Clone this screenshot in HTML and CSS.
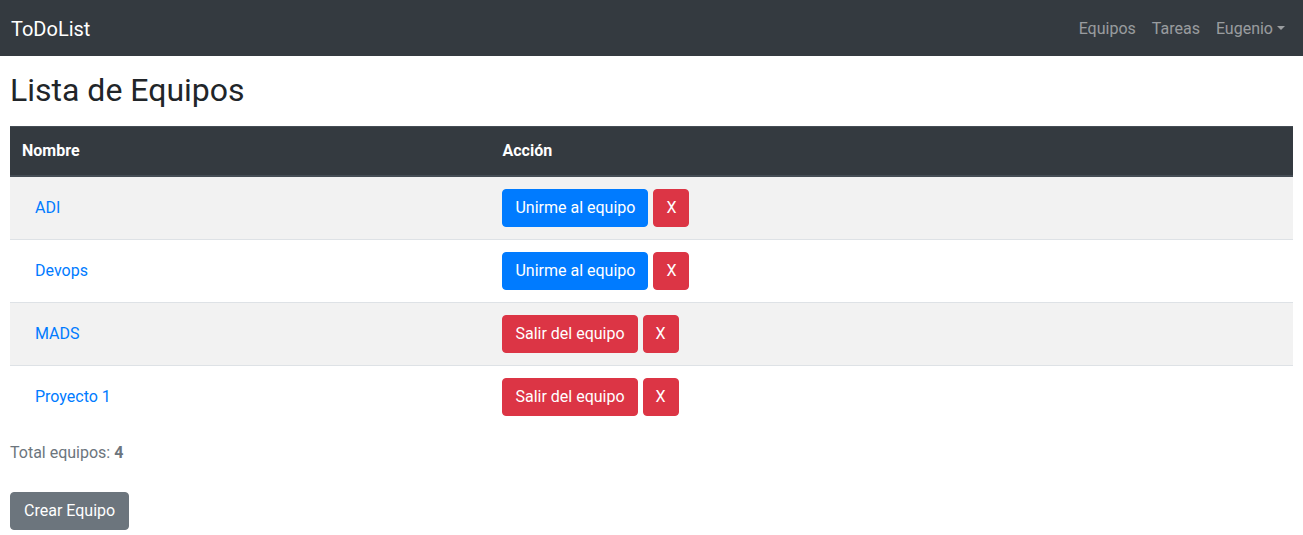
FILE: index.html
```html
<!DOCTYPE html>
<html lang="es">
<head>
<meta charset="utf-8">
<title>ToDoList</title>
<link rel="stylesheet" href="styles.css">
</head>
<body>
<nav class="navbar">
  <a class="brand" href="#">ToDoList</a>
  <ul class="nav">
    <li><a class="nav-link" href="#">Equipos</a></li>
    <li><a class="nav-link" href="#">Tareas</a></li>
    <li><a class="nav-link dropdown" href="#">Eugenio<span class="caret"></span></a></li>
  </ul>
</nav>
<main class="content">
  <h1 class="title">Lista de Equipos</h1>
  <table class="table">
    <thead>
      <tr><th class="col-name">Nombre</th><th>Acción</th></tr>
    </thead>
    <tbody>
      <tr class="odd">
        <td><a class="btn btn-link" href="#">ADI</a></td>
        <td><div class="actions"><a class="btn btn-primary" href="#">Unirme al equipo</a><a class="btn btn-danger" href="#">X</a></div></td>
      </tr>
      <tr>
        <td><a class="btn btn-link" href="#">Devops</a></td>
        <td><div class="actions"><a class="btn btn-primary" href="#">Unirme al equipo</a><a class="btn btn-danger" href="#">X</a></div></td>
      </tr>
      <tr class="odd">
        <td><a class="btn btn-link" href="#">MADS</a></td>
        <td><div class="actions"><a class="btn btn-danger" href="#">Salir del equipo</a><a class="btn btn-danger" href="#">X</a></div></td>
      </tr>
      <tr>
        <td><a class="btn btn-link" href="#">Proyecto 1</a></td>
        <td><div class="actions"><a class="btn btn-danger" href="#">Salir del equipo</a><a class="btn btn-danger" href="#">X</a></div></td>
      </tr>
    </tbody>
  </table>
  <p class="total">Total equipos: <b>4</b></p>
  <a class="btn btn-secondary" href="#">Crear Equipo</a>
</main>
</body>
</html>
```

FILE: styles.css
```css
* { box-sizing: border-box; }
html, body { margin: 0; padding: 0; }
body {
  font-family: Roboto, "Liberation Sans", Arial, sans-serif;
  font-size: 16px;
  line-height: 1.5;
  color: #212529;
  background: #fff;
}
a { text-decoration: none; }

.navbar {
  height: 56px;
  background: #343a40;
  display: flex;
  align-items: center;
  justify-content: space-between;
  padding: 2px 10px 0 11px;
}
.brand {
  color: #fff;
  font-size: 20px;
  line-height: 30px;
}
.nav {
  list-style: none;
  margin: 0;
  padding: 0;
  display: flex;
}
.nav-link {
  display: block;
  padding: 8px 8px;
  color: rgba(255,255,255,.5);
}
.caret {
  display: inline-block;
  margin-left: 4px;
  vertical-align: 4px;
  border-top: 4.8px solid;
  border-right: 4.8px solid transparent;
  border-left: 4.8px solid transparent;
  border-bottom: 0;
}

.content { padding: 0 10px 10px; }
.title {
  font-size: 32px;
  font-weight: 400;
  line-height: 1.2;
  margin: 15px 0 17px;
}

.table {
  width: 100%;
  border-collapse: collapse;
  margin: 0;
}
.table th, .table td {
  padding: 12px;
  text-align: left;
  vertical-align: top;
  border-top: 1px solid #dee2e6;
}
.table thead th {
  background: #343a40;
  color: #fff;
  font-weight: 700;
  border-top: 1px solid #454d55;
  border-bottom: 2px solid #454d55;
}
.col-name { width: 37.45%; }
.table tbody tr.odd { background: rgba(0,0,0,.05); }

.actions { display: flex; gap: 5px; }

.btn {
  display: inline-block;
  padding: 6px 12px;
  font-size: 16px;
  line-height: 24px;
  border: 1px solid transparent;
  border-radius: 4px;
  color: #fff;
  white-space: nowrap;
}
.btn-link { color: #007bff; background: transparent; }
.btn-primary { background: #007bff; border-color: #007bff; }
.btn-danger { background: #dc3545; border-color: #dc3545; }
.btn-secondary { background: #6c757d; border-color: #6c757d; padding: 6px 13px; }

.total {
  color: #6c757d;
  margin: 13px 0 27px;
}
.total b { font-weight: 700; }
```
